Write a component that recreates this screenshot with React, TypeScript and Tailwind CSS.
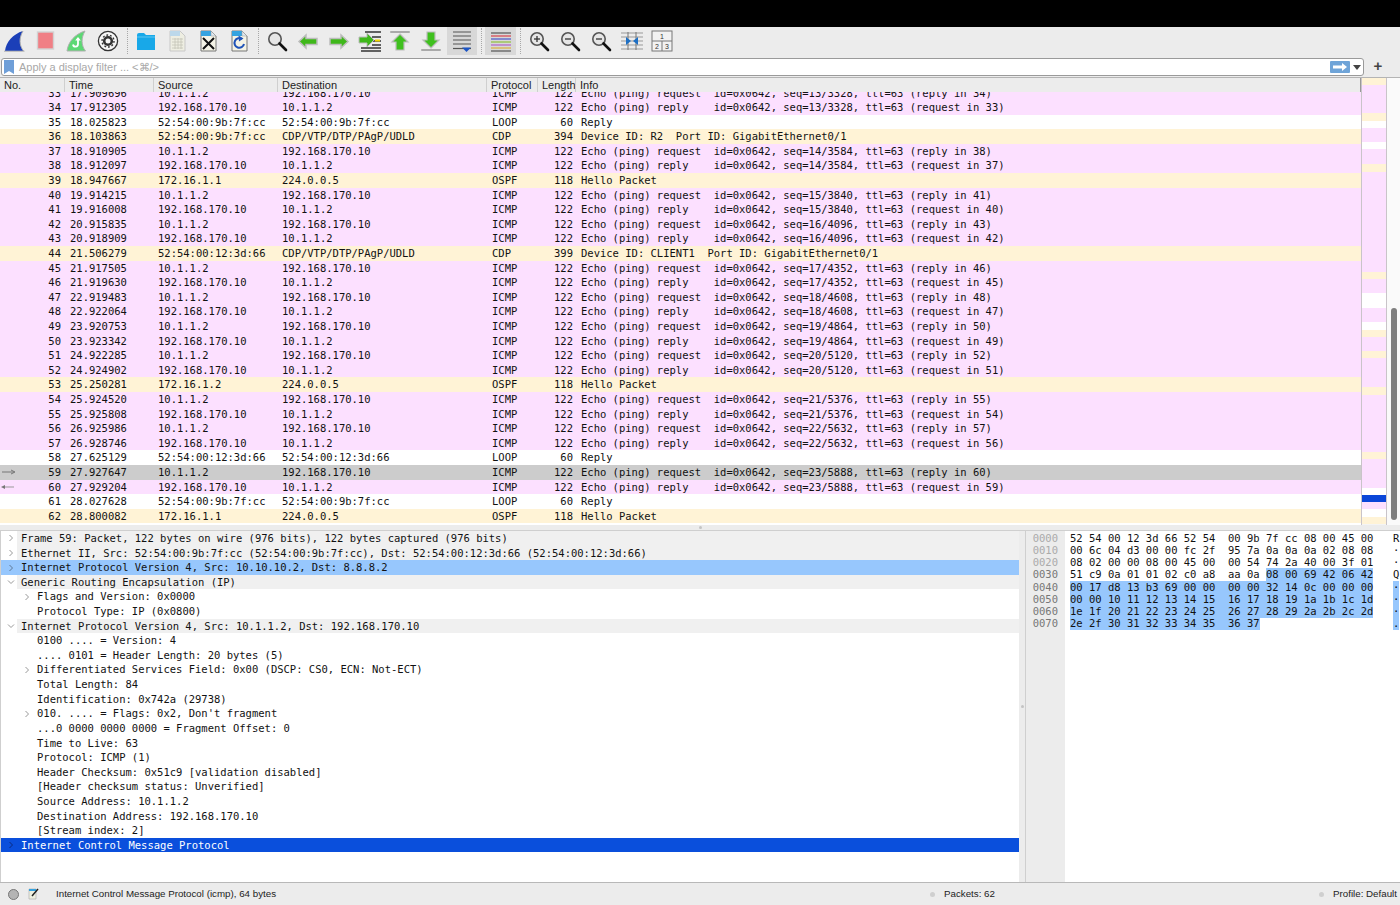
import type { ReactNode } from "react";

type Kind = "icmp" | "route" | "plain";
type Row = { no: number; time: string; src: string; dst: string; proto: string; len: number; info: string; kind: Kind };

const A = "10.1.1.2";
const B = "192.168.170.10";

const echo = (no: number, time: string, req: boolean, seq: string, peer: number): Row => ({
    no,
    time,
    src: req ? A : B,
    dst: req ? B : A,
    proto: "ICMP",
    len: 122,
    info: req
        ? `Echo (ping) request  id=0x0642, seq=${seq}, ttl=63 (reply in ${peer})`
        : `Echo (ping) reply    id=0x0642, seq=${seq}, ttl=63 (request in ${peer})`,
    kind: "icmp",
});

const loop = (no: number, time: string, mac: string): Row => ({ no, time, src: mac, dst: mac, proto: "LOOP", len: 60, info: "Reply", kind: "plain" });
const ospf = (no: number, time: string, src: string): Row => ({ no, time, src, dst: "224.0.0.5", proto: "OSPF", len: 118, info: "Hello Packet", kind: "route" });
const cdp = (no: number, time: string, src: string, len: number, id: string): Row => ({
    no,
    time,
    src,
    dst: "CDP/VTP/DTP/PAgP/UDLD",
    proto: "CDP",
    len,
    info: `Device ID: ${id}  Port ID: GigabitEthernet0/1`,
    kind: "route",
});

const rows: Row[] = [
    echo(33, "17.909696", true, "13/3328", 34),
    echo(34, "17.912305", false, "13/3328", 33),
    loop(35, "18.025823", "52:54:00:9b:7f:cc"),
    cdp(36, "18.103863", "52:54:00:9b:7f:cc", 394, "R2"),
    echo(37, "18.910905", true, "14/3584", 38),
    echo(38, "18.912097", false, "14/3584", 37),
    ospf(39, "18.947667", "172.16.1.1"),
    echo(40, "19.914215", true, "15/3840", 41),
    echo(41, "19.916008", false, "15/3840", 40),
    echo(42, "20.915835", true, "16/4096", 43),
    echo(43, "20.918909", false, "16/4096", 42),
    cdp(44, "21.506279", "52:54:00:12:3d:66", 399, "CLIENT1"),
    echo(45, "21.917505", true, "17/4352", 46),
    echo(46, "21.919630", false, "17/4352", 45),
    echo(47, "22.919483", true, "18/4608", 48),
    echo(48, "22.922064", false, "18/4608", 47),
    echo(49, "23.920753", true, "19/4864", 50),
    echo(50, "23.923342", false, "19/4864", 49),
    echo(51, "24.922285", true, "20/5120", 52),
    echo(52, "24.924902", false, "20/5120", 51),
    ospf(53, "25.250281", "172.16.1.2"),
    echo(54, "25.924520", true, "21/5376", 55),
    echo(55, "25.925808", false, "21/5376", 54),
    echo(56, "26.925986", true, "22/5632", 57),
    echo(57, "26.928746", false, "22/5632", 56),
    loop(58, "27.625129", "52:54:00:12:3d:66"),
    echo(59, "27.927647", true, "23/5888", 60),
    echo(60, "27.929204", false, "23/5888", 59),
    loop(61, "28.027628", "52:54:00:9b:7f:cc"),
    ospf(62, "28.800082", "172.16.1.1"),
];

// overview stripes: [colour class, height]
const stripes: [string, string][] = [
    ["bg-[#fff3d6]", "h-[7px]"], ["bg-[#fce0ff]", "h-[28px]"], ["bg-[#fff3d6]", "h-[8px]"], ["bg-white", "h-[7px]"],
    ["bg-[#fce0ff]", "h-[14px]"], ["bg-white", "h-[7px]"], ["bg-[#fce0ff]", "h-[15px]"], ["bg-[#fff3d6]", "h-[8px]"],
    ["bg-[#fce0ff]", "h-[100px]"], ["bg-[#fff3d6]", "h-[7px]"], ["bg-[#fce0ff]", "h-[14px]"], ["bg-white", "h-[15px]"],
    ["bg-[#fce0ff]", "h-[14px]"], ["bg-white", "h-[8px]"], ["bg-[#fff3d6]", "h-[7px]"], ["bg-[#fce0ff]", "h-[14px]"],
    ["bg-[#fff3d6]", "h-[7px]"], ["bg-[#fce0ff]", "h-[29px]"], ["bg-[#fff3d6]", "h-[8px]"], ["bg-[#fce0ff]", "h-[57px]"],
    ["bg-[#fff3d6]", "h-[7px]"], ["bg-[#fce0ff]", "h-[29px]"], ["bg-white", "h-[7px]"], ["bg-[#0a46d8]", "h-[7px]"],
    ["bg-[#fce0ff]", "h-[7px]"], ["bg-white", "h-[8px]"], ["bg-[#fff3d6]", "h-[7px]"],
];

type Detail = { text: string; level: 0 | 1; arrow?: "right" | "down"; sel?: "light" | "dark" };

const details: Detail[] = [
    { text: "Frame 59: Packet, 122 bytes on wire (976 bits), 122 bytes captured (976 bits)", level: 0, arrow: "right" },
    { text: "Ethernet II, Src: 52:54:00:9b:7f:cc (52:54:00:9b:7f:cc), Dst: 52:54:00:12:3d:66 (52:54:00:12:3d:66)", level: 0, arrow: "right" },
    { text: "Internet Protocol Version 4, Src: 10.10.10.2, Dst: 8.8.8.2", level: 0, arrow: "right", sel: "light" },
    { text: "Generic Routing Encapsulation (IP)", level: 0, arrow: "down" },
    { text: "Flags and Version: 0x0000", level: 1, arrow: "right" },
    { text: "Protocol Type: IP (0x0800)", level: 1 },
    { text: "Internet Protocol Version 4, Src: 10.1.1.2, Dst: 192.168.170.10", level: 0, arrow: "down" },
    { text: "0100 .... = Version: 4", level: 1 },
    { text: ".... 0101 = Header Length: 20 bytes (5)", level: 1 },
    { text: "Differentiated Services Field: 0x00 (DSCP: CS0, ECN: Not-ECT)", level: 1, arrow: "right" },
    { text: "Total Length: 84", level: 1 },
    { text: "Identification: 0x742a (29738)", level: 1 },
    { text: "010. .... = Flags: 0x2, Don't fragment", level: 1, arrow: "right" },
    { text: "...0 0000 0000 0000 = Fragment Offset: 0", level: 1 },
    { text: "Time to Live: 63", level: 1 },
    { text: "Protocol: ICMP (1)", level: 1 },
    { text: "Header Checksum: 0x51c9 [validation disabled]", level: 1 },
    { text: "[Header checksum status: Unverified]", level: 1 },
    { text: "Source Address: 10.1.1.2", level: 1 },
    { text: "Destination Address: 192.168.170.10", level: 1 },
    { text: "[Stream index: 2]", level: 1 },
    { text: "Internet Control Message Protocol", level: 0, arrow: "right", sel: "dark" },
];

// offset, plain bytes, selected bytes, ascii, ascii selected
const hex: [string, string, string, string, boolean][] = [
    ["0000", "52 54 00 12 3d 66 52 54  00 9b 7f cc 08 00 45 00", "", "R", false],
    ["0010", "00 6c 04 d3 00 00 fc 2f  95 7a 0a 0a 0a 02 08 08", "", "·", false],
    ["0020", "08 02 00 00 08 00 45 00  00 54 74 2a 40 00 3f 01", "", "·", false],
    ["0030", "51 c9 0a 01 01 02 c0 a8  aa 0a ", "08 00 69 42 06 42", "Q", false],
    ["0040", "", "00 17 d8 13 b3 69 00 00  00 00 32 14 0c 00 00 00", "·", true],
    ["0050", "", "00 00 10 11 12 13 14 15  16 17 18 19 1a 1b 1c 1d", "·", true],
    ["0060", "", "1e 1f 20 21 22 23 24 25  26 27 28 29 2a 2b 2c 2d", "·", true],
    ["0070", "", "2e 2f 30 31 32 33 34 35  36 37", ".", true],
];

const rowBg: Record<Kind, string> = { icmp: "bg-[#fce0ff]", route: "bg-[#fff3d6]", plain: "bg-white" };

function Tool({ children, active }: { children: ReactNode; active?: boolean }) {
    return (
        <div className={`w-[30.75px] h-[28px] flex items-center justify-center ${active ? "bg-[#d8d8d8]" : ""}`}>
            <svg width="24" height="24" viewBox="0 0 24 24">{children}</svg>
        </div>
    );
}

function Sep() {
    return (
        <div className="w-[8px] h-[28px] flex justify-center py-[1px]">
            <div className="h-full border-l border-dotted border-[#a8a8a8]" />
        </div>
    );
}

function Lens({ mark }: { mark?: "plus" | "minus" | "equal" }) {
    return (
        <>
            <circle cx="10" cy="10" r="6.2" fill="#e6e6e6" stroke="#555" strokeWidth="1.6" />
            <path d="M14.5 14.5 L21 21" stroke="#111" strokeWidth="2.6" strokeLinecap="round" />
            {mark && <path d="M7 10 H13" stroke="#333" strokeWidth="1.3" />}
            {mark === "plus" && <path d="M10 7 V13" stroke="#333" strokeWidth="1.3" />}
        </>
    );
}

function Sheet({ children }: { children: ReactNode }) {
    return (
        <>
            <path d="M5 2 H15 L20 7 V22 H5 Z" fill="#f4f3e6" stroke="#777" strokeWidth="1" />
            <path d="M5 2 H15 V7 H5 Z" fill="#35a3e0" />
            <path d="M15 2 L20 7 H15 Z" fill="#dfe8ee" stroke="#999" strokeWidth="0.5" />
            {children}
        </>
    );
}

function Toolbar() {
    return (
        <div className="h-[28px] flex bg-[#ececec]">
            <Tool>
                <path d="M2 22 C3 13 10 5 20 2 C16 9 16 16 20.5 22 Z" fill="#1b3fb8" />
                <path d="M20 2 C16 9 16 16 20.5 22 M1 22.2 H21.5" fill="none" stroke="#b0b0b0" strokeWidth="1" />
            </Tool>
            <Tool>
                <rect x="3.5" y="3" width="16" height="17" fill="#f07f85" stroke="#d2d2d2" strokeWidth="1.4" />
            </Tool>
            <Tool>
                <path d="M2 22 C3 13 10 5 20 2 C16 9 16 16 20.5 22 Z" fill="#5cd873" stroke="#b0b0b0" strokeWidth="1" />
                <path d="M13 9 V15 C13 18.5 8.5 18.5 8 15.5" fill="none" stroke="#fff" strokeWidth="1.8" />
                <path d="M10.2 11.5 L13 8 L15.8 11.5 Z" fill="#fff" />
            </Tool>
            <Tool>
                <circle cx="12" cy="12" r="9.6" fill="#f6f6f6" stroke="#333" strokeWidth="1.3" />
                <circle cx="12" cy="12" r="3.8" fill="none" stroke="#333" strokeWidth="2.6" />
                <circle cx="12" cy="12" r="6" fill="none" stroke="#333" strokeWidth="1.4" strokeDasharray="1.8 1.9" />
            </Tool>
            <Sep />
            <Tool>
                <path d="M3 6 Q3 4 5 4 H10 L12 6 H21 V21 H3 Z" fill="#18a8e8" />
                <path d="M3 8 H21" stroke="#5cc6f2" strokeWidth="1" />
            </Tool>
            <Tool>
                <path d="M5 2 H15 L20 7 V22 H5 Z" fill="#eeeee2" stroke="#c8c8c8" strokeWidth="1" />
                <path d="M5 2 H15 V7 H5 Z" fill="#bcd8ea" />
                <path d="M7 10 H18 M7 13 H18 M7 16 H18 M7 19 H18 M10 9 V20 M13 9 V20 M16 9 V20" stroke="#c4c4b8" strokeWidth="0.8" />
            </Tool>
            <Tool>
                <Sheet>
                    <path d="M7 9 L18 20 M18 9 L7 20" stroke="#111" strokeWidth="2" />
                </Sheet>
            </Tool>
            <Tool>
                <Sheet>
                    <path d="M15 10 A4.8 4.8 0 1 0 17 15" fill="none" stroke="#1f53b8" strokeWidth="2" />
                    <path d="M11.5 6.5 L16.5 9.5 L12 12.5 Z" fill="#1f53b8" />
                </Sheet>
            </Tool>
            <Sep />
            <Tool><Lens /></Tool>
            <Tool>
                <path d="M3 12.5 L10 6 V9.5 H21 V15.5 H10 V19 Z" fill="#3fb81a" stroke="#bcbcbc" strokeWidth="1.5" />
            </Tool>
            <Tool>
                <path d="M21 12.5 L14 6 V9.5 H3 V15.5 H14 V19 Z" fill="#3fb81a" stroke="#bcbcbc" strokeWidth="1.5" />
            </Tool>
            <Tool>
                <path d="M7 3 H23 M14 8 H23 M15 12 H23 M14 16 H23 M3 19 H23 M3 22 H23" stroke="#333" strokeWidth="1.3" />
                <path d="M17 11.5 H22" stroke="#f4d800" strokeWidth="2" />
                <path d="M16 11 L9 4 V8 H1 V14 H9 V18 Z" fill="#3fb81a" stroke="#bcbcbc" strokeWidth="1" />
            </Tool>
            <Tool>
                <path d="M3 3 H21" stroke="#aaa" strokeWidth="2" strokeLinecap="round" />
                <path d="M12 5 L20 13 H16 V21 H8 V13 H4 Z" fill="#3fc01e" stroke="#bcbcbc" strokeWidth="1.2" />
            </Tool>
            <Tool>
                <path d="M3 21 H21" stroke="#aaa" strokeWidth="2" strokeLinecap="round" />
                <path d="M12 19 L20 11 H16 V3 H8 V11 H4 Z" fill="#3fc01e" stroke="#bcbcbc" strokeWidth="1.2" />
            </Tool>
            <Tool active>
                <path d="M3 3 H21 M3 7 H21 M3 11 H21 M3 15 H21" stroke="#555" strokeWidth="1" />
                <path d="M3 19.5 H21" stroke="#555" strokeWidth="1.2" />
                <path d="M12 18.5 H21 L16.5 23 Z" fill="#1d55c4" />
            </Tool>
            <Sep />
            <Tool active>
                <path d="M2 4 H22" stroke="#555" strokeWidth="1.2" />
                <path d="M2 7 H22" stroke="#d8404a" strokeWidth="1.2" />
                <path d="M2 10 H22" stroke="#4a55c8" strokeWidth="1.2" />
                <path d="M2 13 H22" stroke="#8fbf3a" strokeWidth="1.2" />
                <path d="M2 16 H22" stroke="#b062c8" strokeWidth="1.2" />
                <path d="M2 19 H22" stroke="#d8b040" strokeWidth="1.2" />
                <path d="M2 22 H22" stroke="#555" strokeWidth="1.2" />
            </Tool>
            <Sep />
            <Tool><Lens mark="plus" /></Tool>
            <Tool><Lens mark="minus" /></Tool>
            <Tool><Lens mark="equal" /></Tool>
            <Tool>
                <path d="M1 4 H23 M1 8 H23 M1 12 H23 M1 16 H23 M1 20 H23" stroke="#999" strokeWidth="1" />
                <path d="M8 3 V21 M16 3 V21" stroke="#777" strokeWidth="1" />
                <path d="M6 8 L11 12 L6 16 Z M18 8 L13 12 L18 16 Z" fill="#1d6fc4" />
            </Tool>
            <Tool>
                <rect x="2" y="2" width="20" height="20" fill="#f2f2f2" stroke="#777" strokeWidth="1" />
                <path d="M2 12 H22 M12 12 V22" stroke="#777" strokeWidth="1" />
                <text x="12" y="10" fontSize="7" textAnchor="middle" fill="#333" fontFamily="Liberation Sans">1</text>
                <text x="7" y="20" fontSize="7" textAnchor="middle" fill="#333" fontFamily="Liberation Sans">2</text>
                <text x="17" y="20" fontSize="7" textAnchor="middle" fill="#333" fontFamily="Liberation Sans">3</text>
            </Tool>
        </div>
    );
}

function FilterBar() {
    return (
        <div className="h-[23px] bg-[#ececec] border-b border-[#b4b4b4] flex items-start pl-[1px] pr-[4px]">
            <div className="w-[1363px] h-[18px] mt-[3px] bg-white border border-[#9a9a9a] rounded-[3px] flex items-center">
                <div className="w-[10px] h-[14px] ml-[2px] bg-[#6f9fd8] [clip-path:polygon(0_0,100%_0,100%_100%,50%_78%,0_100%)]" />
                <span className="ml-[5px] flex-1 text-[11px] text-[#a8a8a8]">Apply a display filter ... &lt;⌘/&gt;</span>
                <div className="w-[20px] h-[12px] mr-[3px] bg-[#6fa4d8] rounded-[1px] flex items-center justify-center">
                    <svg width="16" height="10" viewBox="0 0 16 10">
                        <path d="M1 3.5 H10 V1 L15 5 L10 9 V6.5 H1 Z" fill="#fff" />
                    </svg>
                </div>
                <svg width="8" height="5" viewBox="0 0 8 5" className="mr-[2px]">
                    <path d="M0 0 H8 L4 5 Z" fill="#444" />
                </svg>
            </div>
            <span className="w-[28px] text-center text-[15px] leading-[22px] text-[#444] font-bold">+</span>
        </div>
    );
}

const cNo = "w-[65px] pr-[4px] text-right";
const cTime = "w-[88px] pl-[5px]";
const cSrc = "w-[125px] pl-[5px]";
const cDst = "w-[209px] pl-[4px]";
const cProto = "w-[51px] pl-[5px]";
const cLen = "w-[38px] pr-[3px] text-right";
const cInfo = "flex-1 pl-[5px]";

function PacketList() {
    const heads: [string, string][] = [
        ["No.", "w-[65px] pl-[4px]"],
        ["Time", "w-[89px] pl-[4px]"],
        ["Source", "w-[124px] pl-[4px]"],
        ["Destination", "w-[209px] pl-[4px]"],
        ["Protocol", "w-[51px] pl-[4px]"],
        ["Length", "w-[38px] pl-[4px]"],
        ["Info", "flex-1 pl-[4px]"],
    ];
    return (
        <div className="flex h-[447px]">
            <div className="w-[1361px] flex flex-col overflow-hidden">
                <div className="h-[14px] shrink-0 flex bg-[#ececec] text-[11px] leading-[14px] text-[#222] relative z-10">
                    {heads.map(([t, c]) => (
                        <div key={t} className={`${c} border-r ${t === "Info" ? "border-[#999]" : "border-[#cfcfcf]"} overflow-hidden whitespace-nowrap`}>{t}</div>
                    ))}
                </div>
                <div className="flex-1 overflow-hidden">
                    <div className="-mt-[6.5px] font-['DejaVu_Sans_Mono',monospace] text-[10.5px] text-[#111]">
                        {rows.map((r) => (
                            <div
                                key={r.no}
                                className={`h-[14.607px] leading-[14.607px] flex whitespace-pre ${r.no === 59 ? "bg-[#cccccc]" : rowBg[r.kind]}`}
                            >
                                <div className={`${cNo} relative`}>
                                    {r.no === 59 && (
                                        <svg width="14" height="6" viewBox="0 0 14 6" className="absolute left-[2px] top-[4px]">
                                            <path d="M0 3 H12 M9 1 L13 3 L9 5" fill="none" stroke="#777" strokeWidth="1" />
                                        </svg>
                                    )}
                                    {r.no === 60 && (
                                        <svg width="14" height="6" viewBox="0 0 14 6" className="absolute left-[1px] top-[4px]">
                                            <path d="M13 3 H4" stroke="#999" strokeWidth="1" />
                                            <path d="M4 1 L0 3 L4 5 Z" fill="#777" />
                                        </svg>
                                    )}
                                    {r.no}
                                </div>
                                <div className={cTime}>{r.time}</div>
                                <div className={cSrc}>{r.src}</div>
                                <div className={cDst}>{r.dst}</div>
                                <div className={cProto}>{r.proto}</div>
                                <div className={cLen}>{r.len}</div>
                                <div className={cInfo}>{r.info}</div>
                            </div>
                        ))}
                    </div>
                </div>
            </div>
            <div className="w-[26px] border-x border-[#c9c4c9] flex flex-col bg-[#f4f4f4]">
                {stripes.map(([bg, h], i) => (
                    <div key={i} className={`${bg} ${h}`} />
                ))}
            </div>
            <div className="w-[13px] bg-[#fafafa] flex flex-col items-center pt-[230px]">
                <div className="w-[6px] h-[212px] rounded-full bg-[#7f7f7f]" />
            </div>
        </div>
    );
}

function Arrow({ dir, color }: { dir: "right" | "down"; color: string }) {
    return (
        <svg width="8" height="8" viewBox="0 0 8 8">
            <path d={dir === "right" ? "M2.5 1 L5.5 4 L2.5 7" : "M1 2.5 L4 5.5 L7 2.5"} fill="none" stroke={color} strokeWidth="1" />
        </svg>
    );
}

const arrowColor = (d: Detail) => (d.sel === "dark" ? "#0a2a80" : d.sel === "light" ? "#5f7896" : "#999");

function DetailPane() {
    return (
        <div className="w-[1019px] shrink-0 border-l border-[#cfcfcf] bg-white font-['DejaVu_Sans_Mono',monospace] text-[10.5px] text-[#111]">
            {details.map((d) => {
                const bg = d.sel === "light" ? "bg-[#97c7fd]" : d.sel === "dark" ? "bg-[#0a4fdc] text-white" : "";
                return (
                    <div key={d.text} className={`h-[14.62px] leading-[14.62px] flex whitespace-pre ${bg}`}>
                        <div className={`${d.level === 0 ? "w-[16px] pl-[6px]" : "w-[32px] pl-[22px]"} flex items-center shrink-0`}>
                            {d.arrow && <Arrow dir={d.arrow} color={arrowColor(d)} />}
                        </div>
                        <div className={`flex-1 pl-[4px] ${d.level === 0 && !d.sel ? "bg-[#f0f0f0]" : ""}`}>{d.text}</div>
                    </div>
                );
            })}
        </div>
    );
}

function HexPane() {
    return (
        <div className="flex-1 min-w-0 flex border-l border-[#cfcfcf] bg-white font-['DejaVu_Sans_Mono',monospace] text-[10.5px] leading-[12.14px] text-[#111] overflow-hidden">
            <div className="w-[39px] shrink-0 bg-[#ececec] text-right pr-[7px] pt-[1px]">
                {hex.map(([off, , , , asel], i) => (
                    <div key={off} className={`h-[12.14px] ${asel || i === 3 ? "text-[#777]" : "text-[#aaa]"}`}>{off}</div>
                ))}
            </div>
            <div className="pl-[5px] pt-[1px] whitespace-pre">
                {hex.map(([off, plain, sel, ascii, asel]) => (
                    <div key={off} className="h-[12.14px] flex">
                        <div className="w-[323px]">
                            {plain}
                            {sel && <span className="inline-block h-[13px] align-top bg-[#97c7fd]">{sel}</span>}
                        </div>
                        <span className={asel ? "inline-block h-[13px] bg-[#97c7fd]" : ""}>{ascii}</span>
                    </div>
                ))}
            </div>
        </div>
    );
}

function StatusBar() {
    return (
        <div className="h-[23px] shrink-0 border-t border-[#b8b8b8] bg-[#ececec] flex items-center text-[9.75px] text-[#222]">
            <div className="w-[11px] h-[11px] ml-[8px] rounded-full bg-[#b4b4b4] border border-[#777]" />
            <svg width="12" height="12" viewBox="0 0 12 12" className="ml-[9px]">
                <path d="M1 1 H8 V11 H1 Z" fill="#eef0e0" stroke="#aaa" strokeWidth="0.6" />
                <path d="M1 1 H8 V3 H1 Z" fill="#35a3e0" />
                <path d="M4 8 L10 1" stroke="#222" strokeWidth="1.5" />
            </svg>
            <span className="ml-[16px] w-[874px] shrink-0">Internet Control Message Protocol (icmp), 64 bytes</span>
            <div className="w-[5px] h-[5px] rounded-full bg-[#cfcfcf]" />
            <span className="ml-[9px] w-[375px] shrink-0">Packets: 62</span>
            <div className="w-[5px] h-[5px] rounded-full bg-[#cfcfcf]" />
            <span className="ml-[9px] whitespace-nowrap">Profile: Default</span>
        </div>
    );
}

export default function App() {
    return (
        <div className="w-[1400px] h-[905px] flex flex-col overflow-hidden bg-white font-['Liberation_Sans',sans-serif]">
            <div className="h-[27px] shrink-0 bg-black" />
            <Toolbar />
            <FilterBar />
            <PacketList />

            {/* horizontal splitter */}
            <div className="h-[6px] shrink-0 bg-[#ececec] border-b border-[#cfcfcf] flex items-center justify-center">
                <div className="w-[3px] h-[3px] rounded-full bg-[#c4c4c4]" />
            </div>

            <div className="flex-1 min-h-0 flex">
                <DetailPane />
                {/* vertical splitter */}
                <div className="w-[6px] shrink-0 bg-[#ececec] flex items-center justify-center">
                    <div className="w-[3px] h-[3px] rounded-full bg-[#c4c4c4]" />
                </div>
                <HexPane />
            </div>

            <StatusBar />
        </div>
    );
}
